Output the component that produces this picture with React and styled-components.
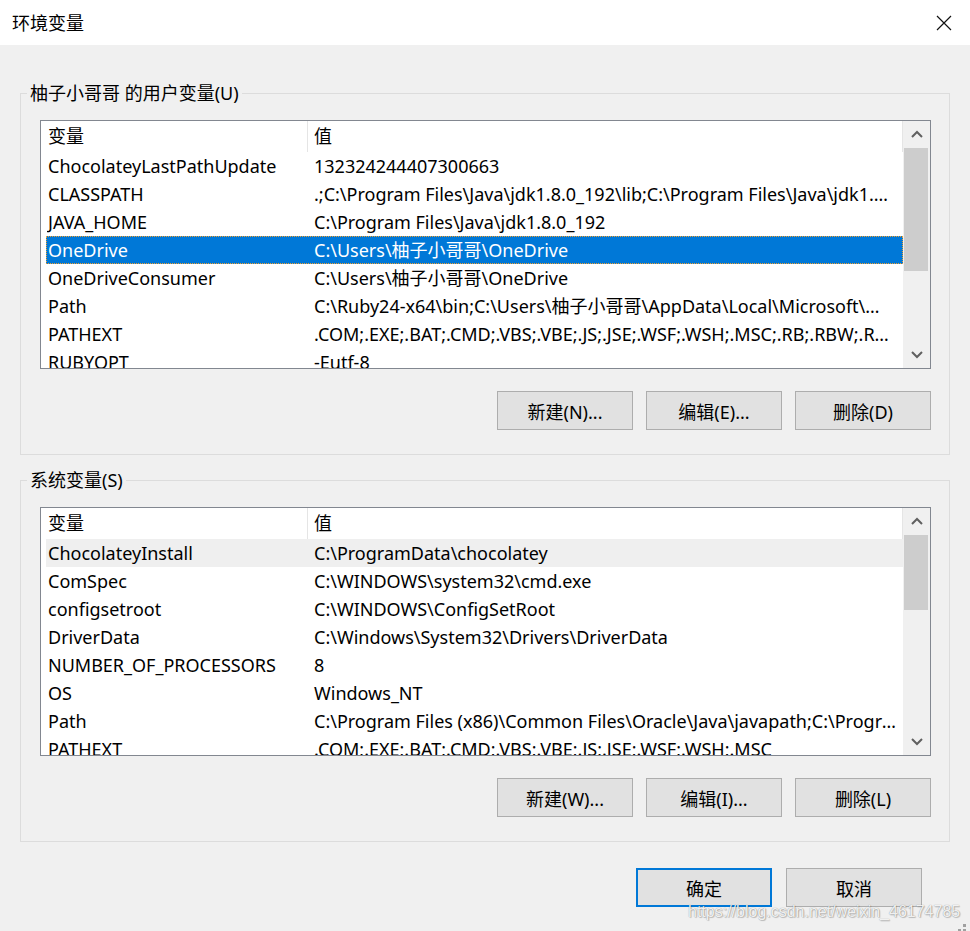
import styled, { createGlobalStyle } from "styled-components";

const GlobalStyle = createGlobalStyle`
  body {
    margin: 0;
    background: #f0f0f0;
  }
`;

const userVars = [
  ["ChocolateyLastPathUpdate", "132324244407300663"],
  ["CLASSPATH", ".;C:\\Program Files\\Java\\jdk1.8.0_192\\lib;C:\\Program Files\\Java\\jdk1.8.0_192\\lib\\tools.jar"],
  ["JAVA_HOME", "C:\\Program Files\\Java\\jdk1.8.0_192"],
  ["OneDrive", "C:\\Users\\柚子小哥哥\\OneDrive", "selected"],
  ["OneDriveConsumer", "C:\\Users\\柚子小哥哥\\OneDrive"],
  ["Path", "C:\\Ruby24-x64\\bin;C:\\Users\\柚子小哥哥\\AppData\\Local\\Microsoft\\WindowsApps;"],
  ["PATHEXT", ".COM;.EXE;.BAT;.CMD;.VBS;.VBE;.JS;.JSE;.WSF;.WSH;.MSC;.RB;.RBW;.RBX"],
  ["RUBYOPT", "-Eutf-8"],
];

const systemVars = [
  ["ChocolateyInstall", "C:\\ProgramData\\chocolatey", "hover"],
  ["ComSpec", "C:\\WINDOWS\\system32\\cmd.exe"],
  ["configsetroot", "C:\\WINDOWS\\ConfigSetRoot"],
  ["DriverData", "C:\\Windows\\System32\\Drivers\\DriverData"],
  ["NUMBER_OF_PROCESSORS", "8"],
  ["OS", "Windows_NT"],
  ["Path", "C:\\Program Files (x86)\\Common Files\\Oracle\\Java\\javapath;C:\\Program Files\\Java\\jdk1.8.0_192\\bin"],
  ["PATHEXT", ".COM;.EXE;.BAT;.CMD;.VBS;.VBE;.JS;.JSE;.WSF;.WSH;.MSC"],
];

const VarList = ({ rows, thumbTop, thumbSize }) => (
  <ListView>
    <ListContent>
      <HeaderRow>
        <HeaderCell $name>变量</HeaderCell>
        <HeaderCell>值</HeaderCell>
      </HeaderRow>
      {rows.map(([name, value, state]) => (
        <Row key={name} $state={state}>
          <NameCell>{name}</NameCell>
          <ValueCell>{value}</ValueCell>
        </Row>
      ))}
    </ListContent>
    <ScrollBar>
      <ScrollArrow>
        <svg width="12" height="8" viewBox="0 0 12 8">
          <polyline points="1,7 6,2 11,7" fill="none" stroke="#606060" strokeWidth="2" />
        </svg>
      </ScrollArrow>
      <ScrollTrack>
        <Thumb $top={thumbTop} $size={thumbSize} />
      </ScrollTrack>
      <ScrollArrow>
        <svg width="12" height="8" viewBox="0 0 12 8">
          <polyline points="1,1 6,6 11,1" fill="none" stroke="#606060" strokeWidth="2" />
        </svg>
      </ScrollArrow>
    </ScrollBar>
  </ListView>
);

const App = () => {
  return (
    <Window>
      <GlobalStyle />
      <TitleBar>
        <Title>环境变量</Title>
        <CloseButton>
          <svg width="16" height="16" viewBox="0 0 16 16">
            <path d="M1 1 L15 15 M15 1 L1 15" stroke="#111" strokeWidth="1.2" />
          </svg>
        </CloseButton>
      </TitleBar>

      <Body>
        <GroupBox>
          <GroupLabel>柚子小哥哥 的用户变量(U)</GroupLabel>
          <VarList rows={userVars} thumbTop={1} thumbSize={123} />
          <ButtonRow>
            <DialogButton>新建(N)...</DialogButton>
            <DialogButton>编辑(E)...</DialogButton>
            <DialogButton>删除(D)</DialogButton>
          </ButtonRow>
        </GroupBox>

        <GroupBox>
          <GroupLabel>系统变量(S)</GroupLabel>
          <VarList rows={systemVars} thumbTop={1} thumbSize={75} />
          <ButtonRow>
            <DialogButton>新建(W)...</DialogButton>
            <DialogButton>编辑(I)...</DialogButton>
            <DialogButton>删除(L)</DialogButton>
          </ButtonRow>
        </GroupBox>

        <Footer>
          <DialogButton $primary>确定</DialogButton>
          <DialogButton>取消</DialogButton>
        </Footer>
      </Body>

      <Watermark>https://blog.csdn.net/weixin_46174785</Watermark>
      <Grip>
        <svg width="14" height="10" viewBox="0 0 14 10">
          <rect x="10" y="0" width="3" height="3" fill="#a0a0a0" />
          <rect x="5" y="5" width="3" height="3" fill="#a0a0a0" />
          <rect x="10" y="5" width="3" height="3" fill="#a0a0a0" />
          <rect x="0" y="10" width="3" height="3" fill="#a0a0a0" />
        </svg>
      </Grip>
    </Window>
  );
};

const Window = styled.div`
  position: relative;
  width: 970px;
  height: 931px;
  overflow: hidden;
  background: #f0f0f0;
  font-family: "Noto Sans", "Noto Sans CJK SC", sans-serif;
  font-size: 18px;
  color: #000;
`;

const TitleBar = styled.div`
  display: flex;
  align-items: center;
  justify-content: space-between;
  height: 45px;
  padding-left: 12px;
  background: #fff;
`;

const Title = styled.span`
  font-size: 18px;
  line-height: 24px;
`;

const CloseButton = styled.div`
  display: flex;
  align-items: center;
  justify-content: center;
  width: 46px;
  height: 45px;
  margin-right: 3px;
`;

const Body = styled.div`
  display: flex;
  flex-direction: column;
  gap: 25px;
  padding: 48px 20px 0 20px;
`;

const GroupBox = styled.div`
  position: relative;
  width: 930px;
  box-sizing: border-box;
  border: 1px solid #dcdcdc;
  padding: 26px 17px 24px 19px;
`;

const GroupLabel = styled.span`
  position: absolute;
  top: -13px;
  left: 6px;
  padding: 0 3px;
  background: #f0f0f0;
  line-height: 24px;
`;

const ListView = styled.div`
  display: flex;
  width: 891px;
  height: 249px;
  box-sizing: border-box;
  border: 1px solid #828790;
  background: #fff;
`;

const ListContent = styled.div`
  flex: 1;
  min-width: 0;
  padding-left: 5px;
  overflow: hidden;
`;

const HeaderRow = styled.div`
  display: flex;
  height: 31px;
  line-height: 31px;
`;

const HeaderCell = styled.div`
  box-sizing: border-box;
  width: ${(p) => (p.$name ? "262px" : "auto")};
  flex: ${(p) => (p.$name ? "none" : "1")};
  padding-left: ${(p) => (p.$name ? "2px" : "6px")};
  border-right: 1px solid #e5e5e5;
  white-space: nowrap;
`;

const Row = styled.div`
  display: flex;
  box-sizing: border-box;
  height: 28px;
  line-height: 26px;
  border: 1px ${(p) => (p.$state === "selected" ? "dotted #f0a030" : "solid transparent")};
  background: ${(p) =>
    p.$state === "selected" ? "#0078d7" : p.$state === "hover" ? "#efefef" : "transparent"};
  color: ${(p) => (p.$state === "selected" ? "#fff" : "#000")};
`;

const NameCell = styled.div`
  flex: none;
  box-sizing: border-box;
  width: 261px;
  padding-left: 1px;
  white-space: nowrap;
  overflow: hidden;
`;

const ValueCell = styled.div`
  flex: 1;
  min-width: 0;
  padding: 0 6px 0 6px;
  white-space: nowrap;
  overflow: hidden;
  text-overflow: ellipsis;
`;

const ScrollBar = styled.div`
  display: flex;
  flex-direction: column;
  width: 27px;
  background: #f0f0f0;
`;

const ScrollArrow = styled.div`
  display: flex;
  align-items: center;
  justify-content: center;
  height: 26px;
  flex: none;
`;

const ScrollTrack = styled.div`
  flex: 1;
  padding: 0 2px 0 1px;
`;

const Thumb = styled.div`
  margin-top: ${(p) => p.$top}px;
  height: ${(p) => p.$size}px;
  background: #cdcdcd;
`;

const ButtonRow = styled.div`
  display: flex;
  justify-content: flex-end;
  gap: 13px;
  margin-top: 22px;
  margin-right: 1px;
`;

const DialogButton = styled.button`
  width: 136px;
  height: 39px;
  box-sizing: border-box;
  background: #e1e1e1;
  border: ${(p) => (p.$primary ? "2px solid #0078d7" : "1px solid #adadad")};
  font-family: inherit;
  font-size: 18px;
  color: #000;
  padding: 0;
`;

const Footer = styled.div`
  display: flex;
  justify-content: flex-end;
  gap: 14px;
  margin-top: 1px;
  padding-right: 28px;
`;

const Watermark = styled.div`
  position: absolute;
  left: 688px;
  top: 901px;
  font-family: "Liberation Sans", Arial, sans-serif;
  font-size: 16px;
  line-height: 22px;
  color: rgba(255, 255, 255, 0.9);
  text-shadow: 0 0 1px rgba(0, 0, 0, 0.45), 1px 1px 1px rgba(0, 0, 0, 0.2);
  white-space: nowrap;
`;

const Grip = styled.div`
  position: absolute;
  right: 3px;
  bottom: 3px;
  width: 14px;
  height: 13px;

  svg {
    overflow: visible;
  }
`;

export default App;
